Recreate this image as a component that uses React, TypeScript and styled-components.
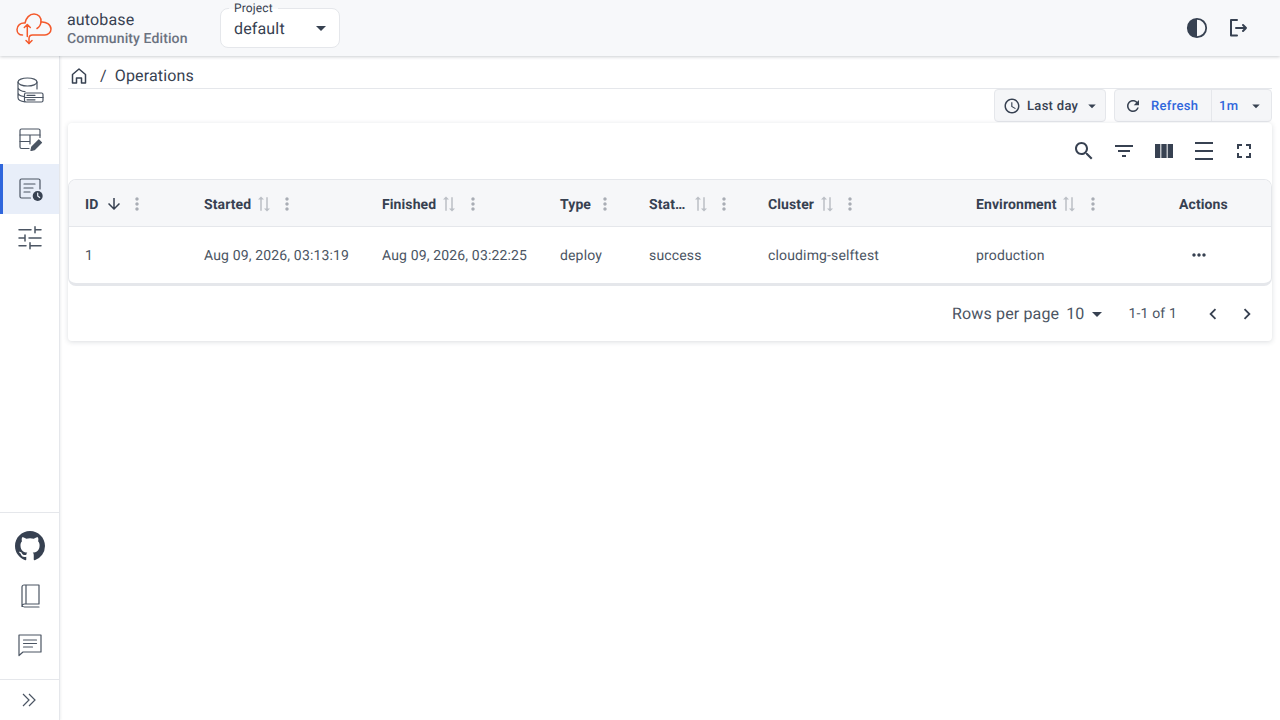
import type { ReactNode } from 'react'
import styled, { createGlobalStyle } from 'styled-components'
import { BsGithub } from 'react-icons/bs'

const GlobalStyle = createGlobalStyle`
  html, body {
    margin: 0;
    height: 100%;
    background: #fff;
    font-family: Roboto, "Liberation Sans", sans-serif;
    color: #374151;
    text-rendering: geometricPrecision;
  }
  * { box-sizing: border-box; }
`

const Page = styled.div`
  width: 1280px;
  height: 720px;
  display: flex;
  flex-direction: column;
  overflow: hidden;
`

const Header = styled.header`
  height: 56px;
  flex: none;
  display: flex;
  align-items: center;
  padding: 0 24px 0 16px;
  background: #f7f8fa;
  box-shadow: 0 1px 3px rgba(55, 65, 81, 0.25);
  position: relative;
  z-index: 2;
`

const Brand = styled.div`
  display: flex;
  flex-direction: column;
  margin: 2px 0 0 15px;
  width: 153px;
`

const BrandName = styled.span`
  font-size: 16px;
  line-height: 20px;
  letter-spacing: 0.15px;
`

const BrandEdition = styled.span`
  font-size: 14px;
  line-height: 17px;
  font-weight: 500;
  letter-spacing: 0.1px;
  color: #6b7280;
  padding-top: 1px;
`

const ProjectSelect = styled.div`
  position: relative;
  width: 120px;
  height: 40px;
  display: flex;
  align-items: center;
  justify-content: space-between;
  padding: 0 6px 0 13px;
  background: #fff;
  border: 1px solid #e5e7eb;
  border-radius: 8px;
  font-size: 16px;
  letter-spacing: 0.15px;
`

const ProjectLabel = styled.span`
  position: absolute;
  top: -9px;
  left: 8px;
  padding: 0 5px;
  font-size: 12px;
  line-height: 16px;
  letter-spacing: 0.15px;
  background: linear-gradient(#f7f8fa 9px, #fff 9px);
`

const HeaderActions = styled.div`
  margin-left: auto;
  display: flex;
  align-items: center;
  gap: 18px;
  padding-right: 6px;
`

const Body = styled.div`
  flex: 1;
  display: flex;
  min-height: 0;
`

const Sidebar = styled.nav`
  width: 60px;
  flex: none;
  display: flex;
  flex-direction: column;
  border-right: 1px solid #e5e7eb;
  box-shadow: 1px 0 2px rgba(55, 65, 81, 0.08);
`

const NavGroup = styled.div`
  display: flex;
  flex-direction: column;
  padding-top: 9px;
`

const NavItem = styled.div<{ $active?: boolean }>`
  height: 49.5px;
  display: flex;
  align-items: center;
  justify-content: center;
  background: ${p => (p.$active ? '#e8eef9' : 'transparent')};
  border-left: 3px solid ${p => (p.$active ? '#2f66dc' : 'transparent')};
  padding-right: 3px;
`

const SidebarBottom = styled.div`
  margin-top: auto;
  border-top: 1px solid #e5e7eb;
  display: flex;
  flex-direction: column;
  padding-top: 9px;
`

const Expand = styled.div`
  height: 41px;
  margin-top: 9px;
  border-top: 1px solid #e5e7eb;
  display: flex;
  align-items: center;
  justify-content: center;
  padding-right: 2px;
`

const Main = styled.main`
  flex: 1;
  min-width: 0;
  padding: 0 8px;
  display: flex;
  flex-direction: column;
`

const Breadcrumbs = styled.div`
  height: 33px;
  flex: none;
  display: flex;
  align-items: center;
  padding: 7px 0 0 2px;
  border-bottom: 1px solid #e5e7eb;
  font-size: 16px;
  letter-spacing: 0.15px;
`

const Slash = styled.span`
  margin: 0 8px 0 12px;
`

const Toolbar = styled.div`
  height: 34px;
  flex: none;
  display: flex;
  justify-content: flex-end;
  gap: 8px;
`

const ToolGroup = styled.div`
  height: 33px;
  display: flex;
  align-items: center;
  background: #f5f6f8;
  border: 1px solid #e5e7eb;
  border-radius: 4px;
  font-size: 13px;
  font-weight: 500;
  letter-spacing: 0.3px;
`

const ToolButton = styled.div<{ $width: number; $pad: number; $blue?: boolean; $divided?: boolean }>`
  width: ${p => p.$width}px;
  height: 100%;
  display: flex;
  align-items: center;
  padding-left: ${p => p.$pad}px;
  color: ${p => (p.$blue ? '#2f66dc' : '#374151')};
  border-right: ${p => (p.$divided ? '1px solid #e5e7eb' : 'none')};
`

const ToolText = styled.span<{ $left: number; $right: number }>`
  margin-left: ${p => p.$left}px;
  margin-right: ${p => p.$right}px;
  padding-top: 2px;
`

const Card = styled.section`
  background: #fff;
  border-radius: 4px;
  box-shadow: 0 1px 5px rgba(55, 65, 81, 0.18);
`

const CardTop = styled.div`
  height: 56px;
  display: flex;
  align-items: center;
  justify-content: flex-end;
  padding-right: 8px;
`

const IconBtn = styled.div`
  width: 40px;
  height: 40px;
  display: flex;
  align-items: center;
  justify-content: center;
`

const TableWrap = styled.div`
  border: 1px solid #e5e7eb;
  border-bottom-width: 3px;
  border-radius: 8px;
  overflow: hidden;
`

const Row = styled.div`
  display: grid;
  grid-template-columns: 119px 178px 178px 89px 119px 208px 203px 108px;
  align-items: center;
`

const HeadRow = styled(Row)`
  height: 47px;
  background: #f6f7f9;
  border-bottom: 1px solid #e5e7eb;
`

const BodyRow = styled(Row)`
  height: 56px;
`

const HeadCell = styled.div`
  display: flex;
  align-items: center;
  padding: 2px 0 0 16px;
  font-size: 14px;
  font-weight: 700;
  letter-spacing: 0.1px;
`

const HeadLabel = styled.span`
  padding-top: 2px;
`

const Cell = styled.div`
  padding-left: 16px;
  padding-top: 2px;
  font-size: 14px;
  letter-spacing: 0.15px;
  color: #4b5563;
`

const ActionCell = styled(Cell)`
  display: flex;
  padding: 0 0 0 26px;
`

const Sort = styled.span<{ $gap: number }>`
  display: flex;
  margin-left: ${p => p.$gap}px;
  opacity: 0.3;
  transform: rotate(90deg);
`

const SortActive = styled.span`
  display: flex;
  margin-left: 7px;
`

const Grip = styled.span<{ $gap: number }>`
  display: flex;
  margin-left: ${p => p.$gap}px;
  opacity: 0.4;
`

const Footer = styled.div`
  height: 55px;
  display: flex;
  align-items: center;
  justify-content: flex-end;
  padding-right: 8px;
  font-size: 16px;
  letter-spacing: 0.15px;
  color: #4b5563;
`

const RowsValue = styled.span`
  margin-left: 7px;
  display: flex;
  align-items: center;
`

const Count = styled.span`
  margin: 0 19px 0 20px;
  font-size: 14px;
`

const Pager = styled.div`
  width: 34px;
  display: flex;
  justify-content: center;
`

const Mui = ({ d, size = 24, color = '#374151' }: { d: string; size?: number; color?: string }) => (
  <svg width={size} height={size} viewBox="0 0 24 24" fill={color}>
    <path d={d} />
  </svg>
)

const icons = {
  search: 'M15.5 14h-.79l-.28-.27C15.41 12.59 16 11.11 16 9.5 16 5.91 13.09 3 9.5 3S3 5.91 3 9.5 5.91 16 9.5 16c1.61 0 3.09-.59 4.23-1.57l.27.28v.79l5 4.99L20.49 19l-4.99-5zm-6 0C7.01 14 5 11.99 5 9.5S7.01 5 9.5 5 14 7.01 14 9.5 11.99 14 9.5 14z',
  filter: 'M10 18h4v-2h-4v2zM3 6v2h18V6H3zm3 7h12v-2H6v2z',
  columns: 'M14.67 5v14H9.33V5h5.34zm1 14H21V5h-5.33v14zm-7.34 0V5H3v14h5.33z',
  density: 'M3 3h18v2H3zm0 16h18v2H3zm0-8h18v2H3z',
  fullscreen: 'M7 14H5v5h5v-2H7v-3zm-2-4h2V7h3V5H5v5zm12 7h-3v2h5v-5h-2v3zM14 5v2h3v3h2V5h-5z',
  sort: 'M22 8l-4-4v3H3v2h15v3l4-4zM2 16l4 4v-3h15v-2H6v-3l-4 4z',
  more: 'M12 8c1.1 0 2-.9 2-2s-.9-2-2-2-2 .9-2 2 .9 2 2 2zm0 2c-1.1 0-2 .9-2 2s.9 2 2 2 2-.9 2-2-.9-2-2-2zm0 6c-1.1 0-2 .9-2 2s.9 2 2 2 2-.9 2-2-.9-2-2-2z',
  dots: 'M6 10c-1.1 0-2 .9-2 2s.9 2 2 2 2-.9 2-2-.9-2-2-2zm12 0c-1.1 0-2 .9-2 2s.9 2 2 2 2-.9 2-2-.9-2-2-2zm-6 0c-1.1 0-2 .9-2 2s.9 2 2 2 2-.9 2-2-.9-2-2-2z',
  down: 'M20 12l-1.41-1.41L13 16.17V4h-2v12.17l-5.58-5.59L4 12l8 8 8-8z',
  clock: 'M11.99 2C6.47 2 2 6.48 2 12s4.47 10 9.99 10C17.52 22 22 17.52 22 12S17.52 2 11.99 2zM12 20c-4.42 0-8-3.58-8-8s3.58-8 8-8 8 3.58 8 8-3.58 8-8 8zm.5-13H11v6l5.25 3.15.75-1.23-4.5-2.67z',
  refresh: 'M17.65 6.35C16.2 4.9 14.21 4 12 4c-4.42 0-7.99 3.58-7.99 8s3.57 8 7.99 8c3.73 0 6.84-2.55 7.73-6h-2.08c-.82 2.33-3.04 4-5.65 4-3.31 0-6-2.69-6-6s2.69-6 6-6c1.66 0 3.14.69 4.22 1.78L13 11h7V4l-2.35 2.35z',
  caret: 'M7 10l5 5 5-5z',
  left: 'M15.41 7.41L14 6l-6 6 6 6 1.41-1.41L10.83 12z',
  right: 'M10 6L8.59 7.41 13.17 12l-4.58 4.59L10 18l6-6z',
}

const Line = ({ children }: { children: ReactNode }) => (
  <svg width={30} height={30} viewBox="0 0 30 30" fill="none" stroke="#4b5563" strokeWidth="1.2" strokeLinecap="round" strokeLinejoin="round">
    {children}
  </svg>
)

const Logo = () => (
  <svg width="36" height="33" viewBox="0 0 36 33" fill="none" stroke="#f4592b" strokeWidth="1.5" strokeLinecap="round" strokeLinejoin="round">
    <path d="M6.5 23C3 23 1 20.5 1 17.5 1 13.5 4.5 10.5 9 11 10 6 13.5 2 18 2c4.500 0 7.500 3.500 7 8-.2 2.500-1.500 5-4 6.500" />
    <path d="M25 10c5-.5 10 2.500 10 7 0 3.500-3 6-6 6H16.500C14 23 13 24.500 13 26.500v5" />
    <path d="M10 28.500l3 3 3-3M11.300 24.500v-12M8.300 15.500l3-3 3 3" />
  </svg>
)

const columns = [
  { label: 'ID', active: true, gap: 4, sortGap: 0 },
  { label: 'Started', gap: 4, sortGap: 4 },
  { label: 'Finished', gap: 5, sortGap: 4 },
  { label: 'Type', noSort: true, gap: 4, sortGap: 0 },
  { label: 'Stat…', gap: 4, sortGap: 7 },
  { label: 'Cluster', gap: 4, sortGap: 4 },
  { label: 'Environment', gap: 5, sortGap: 3 },
]

const cells = ['1', 'Aug 09, 2026, 03:13:19', 'Aug 09, 2026, 03:22:25', 'deploy', 'success', 'cloudimg-selftest', 'production']

export default function App() {
  return (
    <Page>
      <GlobalStyle />
      <Header>
        <Logo />
        <Brand>
          <BrandName>autobase</BrandName>
          <BrandEdition>Community Edition</BrandEdition>
        </Brand>
        <ProjectSelect>
          <ProjectLabel>Project</ProjectLabel>
          default
          <Mui d={icons.caret} />
        </ProjectSelect>
        <HeaderActions>
          <svg width="22" height="22" viewBox="0 0 22 22">
            <circle cx="11" cy="11" r="9.2" fill="none" stroke="#374151" strokeWidth="1.8" />
            <path d="M11 1.800a9.200 9.200 0 0 0 0 18.400z" fill="#374151" />
          </svg>
          <svg width="24" height="24" viewBox="0 0 24 24" fill="none" stroke="#374151" strokeWidth="2" strokeLinecap="round" strokeLinejoin="round">
            <path d="M11 4H5v15.500h6M10 12h10M17 9l3 3-3 3" />
          </svg>
        </HeaderActions>
      </Header>
      <Body>
        <Sidebar>
          <NavGroup>
            <NavItem>
              <Line>
                <ellipse cx="12.500" cy="7" rx="9.500" ry="4" />
                <path d="M3 7v15.500c0 2.500 3.500 4 7 4.300M22 7v7M3 12.500c0 2 3.500 3.800 7 4.100M3 17.800c0 2 3 3.300 6 3.700" />
                <rect x="9.500" y="18" width="18.500" height="9" rx="1.500" />
                <path d="M9.500 22.500h18.500M12 20.300h8M12 24.800h8" />
              </Line>
            </NavItem>
            <NavItem>
              <Line>
                <path d="M14 24.500H6.500A1.500 1.500 0 0 1 5 23V6.500A1.500 1.500 0 0 1 6.500 5h17A1.500 1.500 0 0 1 25 6.500v7" />
                <path d="M5 11h20M15 11v9M5 17.500h10" />
                <path d="M16 26.500l.8-3.500 7-7 2.700 2.700-7 7z" fill="#4b5563" />
              </Line>
            </NavItem>
            <NavItem $active>
              <Line>
                <path d="M15.500 24H6.500A1.500 1.500 0 0 1 5 22.500v-16A1.500 1.500 0 0 1 6.500 5h17A1.500 1.500 0 0 1 25 6.500V15" />
                <path d="M9 10h11M9 14h9M9 18h6" />
                <circle cx="22.700" cy="22" r="5" fill="#374151" stroke="none" />
                <path d="M22.700 19v3l2 1.500" stroke="#e8eef9" />
              </Line>
            </NavItem>
            <NavItem>
              <Line>
                <path d="M4 6.700h12M20 3.700v6M20 6.700h6M4 15h6M10 12v6M14 15h12M4 22.700h7M15 19.700v6M15 22.700h11" strokeWidth="1.500" />
              </Line>
            </NavItem>
          </NavGroup>
          <SidebarBottom>
            <NavItem>
              <BsGithub size={30} color="#374151" />
            </NavItem>
            <NavItem>
              <Line>
                <path d="M9 4h15v19H9.500A2.500 2.500 0 0 0 7 25.500V6A2 2 0 0 1 9 4zM11 4v19M7 24a2.500 2.500 0 0 0 2.500 2H24" />
              </Line>
            </NavItem>
            <NavItem>
              <Line>
                <path d="M4 5h22v17H8l-4 3.500z" />
                <path d="M8.500 10h13M8.500 13.500h13M8.500 17h9" />
              </Line>
            </NavItem>
            <Expand>
              <svg width="18" height="18" viewBox="0 0 18 18" fill="none" stroke="#4b5563" strokeWidth="1.2">
                <path d="M3 3l6 6-6 6M9 3l6 6-6 6" />
              </svg>
            </Expand>
          </SidebarBottom>
        </Sidebar>
        <Main>
          <Breadcrumbs>
            <svg width="18" height="18" viewBox="0 0 18 18" fill="none" stroke="#374151" strokeWidth="1.5" strokeLinejoin="round">
              <path d="M2.500 7.500 9 2l6.500 5.500V16h-4v-5h-5v5h-4z" />
            </svg>
            <Slash>/</Slash>
            Operations
          </Breadcrumbs>
          <Toolbar>
            <ToolGroup>
              <ToolButton $width={110} $pad={8}>
                <Mui d={icons.clock} size={18} />
                <ToolText $left={6} $right={5}>Last day</ToolText>
                <Mui d={icons.caret} size={18} />
              </ToolButton>
            </ToolGroup>
            <ToolGroup>
              <ToolButton $width={97} $pad={9} $blue $divided>
                <Mui d={icons.refresh} size={18} />
                <ToolText $left={9} $right={0}>Refresh</ToolText>
              </ToolButton>
              <ToolButton $width={59} $pad={7} $blue>
                <ToolText $left={0} $right={9}>1m</ToolText>
                <Mui d={icons.caret} size={18} />
              </ToolButton>
            </ToolGroup>
          </Toolbar>
          <Card>
            <CardTop>
              <IconBtn><Mui d={icons.search} /></IconBtn>
              <IconBtn><Mui d={icons.filter} /></IconBtn>
              <IconBtn><Mui d={icons.columns} /></IconBtn>
              <IconBtn><Mui d={icons.density} /></IconBtn>
              <IconBtn><Mui d={icons.fullscreen} /></IconBtn>
            </CardTop>
            <TableWrap>
              <HeadRow>
                {columns.map(c => (
                  <HeadCell key={c.label}>
                    <HeadLabel>{c.label}</HeadLabel>
                    {c.active && <SortActive><Mui d={icons.down} size={18} /></SortActive>}
                    {!c.active && !c.noSort && <Sort $gap={c.sortGap}><Mui d={icons.sort} size={18} /></Sort>}
                    <Grip $gap={c.gap}><Mui d={icons.more} size={20} /></Grip>
                  </HeadCell>
                ))}
                <HeadCell><HeadLabel>Actions</HeadLabel></HeadCell>
              </HeadRow>
              <BodyRow>
                {cells.map(c => <Cell key={c}>{c}</Cell>)}
                <ActionCell><Mui d={icons.dots} size={20} /></ActionCell>
              </BodyRow>
            </TableWrap>
            <Footer>
              <span>Rows per page</span>
              <RowsValue>10<Mui d={icons.caret} /></RowsValue>
              <Count>1-1 of 1</Count>
              <Pager><Mui d={icons.left} size={22} /></Pager>
              <Pager><Mui d={icons.right} size={22} /></Pager>
            </Footer>
          </Card>
        </Main>
      </Body>
    </Page>
  )
}
